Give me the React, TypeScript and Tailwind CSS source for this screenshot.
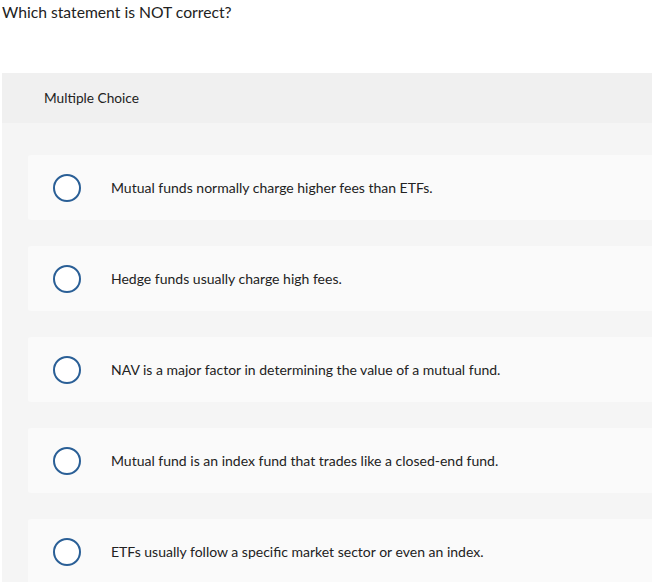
const options = [
  "Mutual funds normally charge higher fees than ETFs.",
  "Hedge funds usually charge high fees.",
  "NAV is a major factor in determining the value of a mutual fund.",
  "Mutual fund is an index fund that trades like a closed-end fund.",
  "ETFs usually follow a specific market sector or even an index.",
];

export default function App() {
  return (
    <div
      className="h-[582px] w-full overflow-hidden bg-white text-[#222]"
      style={{ fontFamily: "Lato, 'Open Sans', sans-serif" }}
    >
      {/* Question */}
      <div className="pl-[2px] pt-[2px] text-[15.7px] leading-[20px]">
        Which statement is NOT correct?
      </div>

      <div className="ml-[2px] mt-[51px]">
        {/* Header */}
        <div className="flex h-[50px] items-center bg-[#f0f0f0] pl-[42px] text-[13.7px]">
          Multiple Choice
        </div>

        {/* Options */}
        <div className="flex flex-col gap-[26px] bg-[#f5f5f5] pl-[26px] pt-[32px]">
          {options.map((o) => (
            <div
              key={o}
              className="flex h-[65px] items-center rounded-l-[3px] bg-[#fafafa] pl-[25px]"
            >
              <span className="h-7 w-7 shrink-0 rounded-full border-2 border-[#2a5f96] bg-white" />
              <span className="ml-[30px] text-[14px]">{o}</span>
            </div>
          ))}
        </div>
      </div>
    </div>
  );
}
